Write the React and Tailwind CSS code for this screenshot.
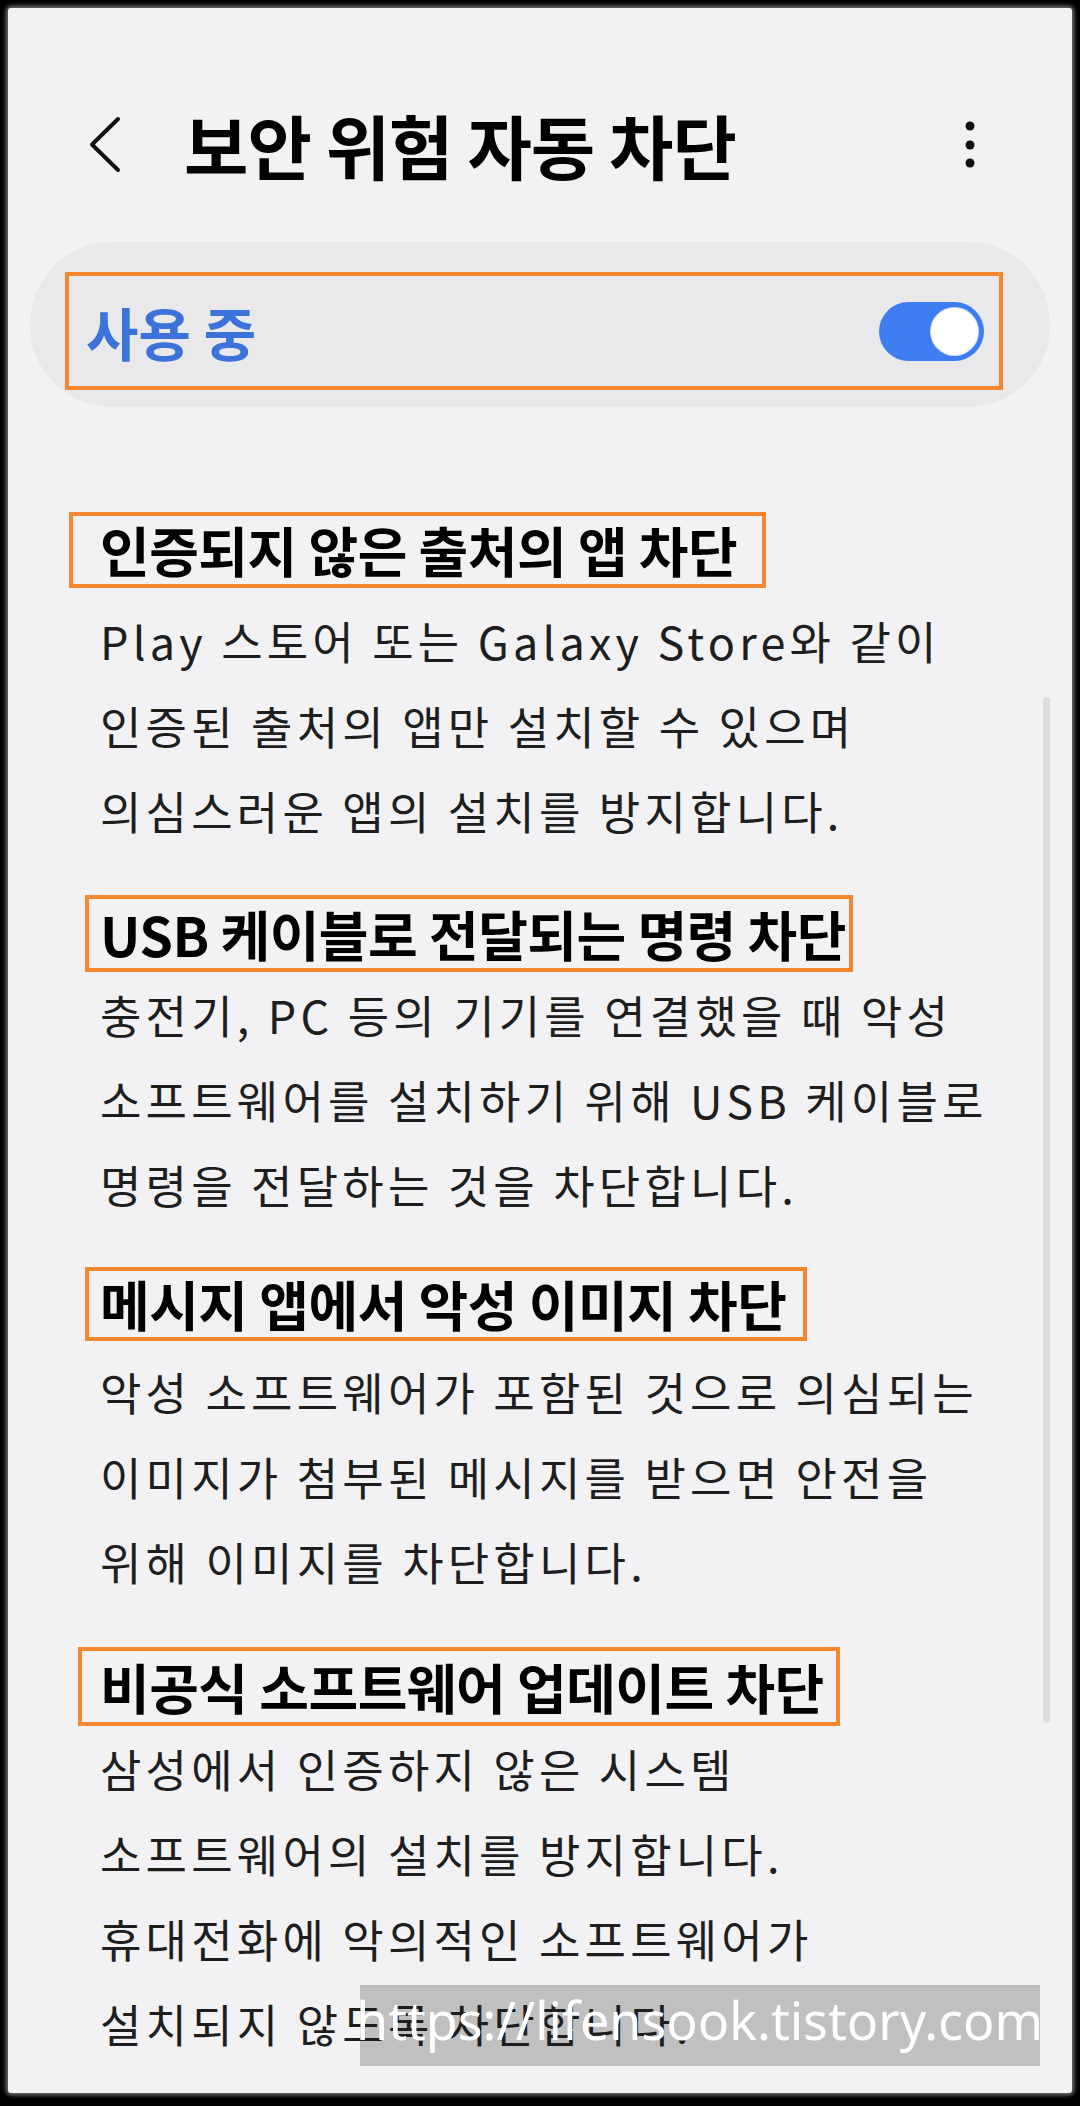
import React from "react";

const sections = [
  {
    title: "인증되지 않은 출처의 앱 차단",
    box: "mt-[105px] ml-[61px] w-[697px] h-[76px] pl-[27px]",
    body: "mt-[10px]",
    lines: [
      "Play 스토어 또는 Galaxy Store와 같이",
      "인증된 출처의 앱만 설치할 수 있으며",
      "의심스러운 앱의 설치를 방지합니다.",
    ],
  },
  {
    title: "USB 케이블로 전달되는 명령 차단",
    box: "mt-[42px] ml-[77px] w-[768px] h-[77px] pl-[11px]",
    body: "mt-0",
    lines: [
      "충전기, PC 등의 기기를 연결했을 때 악성",
      "소프트웨어를 설치하기 위해 USB 케이블로",
      "명령을 전달하는 것을 차단합니다.",
    ],
  },
  {
    title: "메시지 앱에서 악성 이미지 차단",
    box: "mt-[40px] ml-[77px] w-[722px] h-[74px] pl-[11px]",
    body: "mt-[8px]",
    lines: [
      "악성 소프트웨어가 포함된 것으로 의심되는",
      "이미지가 첨부된 메시지를 받으면 안전을",
      "위해 이미지를 차단합니다.",
    ],
  },
  {
    title: "비공식 소프트웨어 업데이트 차단",
    box: "mt-[43px] ml-[70px] w-[762px] h-[79px] pl-[18px]",
    body: "mt-0",
    lines: [
      "삼성에서 인증하지 않은 시스템",
      "소프트웨어의 설치를 방지합니다.",
      "휴대전화에 악의적인 소프트웨어가",
      "설치되지 않도록 차단합니다.",
    ],
  },
];

function Section({ s }) {
  return (
    <div>
      {/* orange annotation box round the heading */}
      <div
        className={`${s.box} flex items-center border-[4px] border-[#f5872e]`}
      >
        <span className="whitespace-nowrap text-[54px] font-bold leading-none tracking-[-0.5px] text-black">
          {s.title}
        </span>
      </div>
      <div className={`${s.body} ml-[92px]`}>
        {s.lines.map((line) => (
          <p
            key={line}
            className="whitespace-nowrap text-[45px] leading-[85px] tracking-[4.2px] text-[#1e1e1e]"
          >
            {line}
          </p>
        ))}
      </div>
    </div>
  );
}

export default function App() {
  return (
    <div className="h-[2106px] w-[1080px] bg-black px-[8px] pt-[8px] [font-family:'Noto_Sans_CJK_KR','Noto_Sans',sans-serif]">
      <div className="relative h-[2085px] w-[1064px] overflow-hidden rounded-[3px] bg-[#f2f2f4] shadow-[0_0_4px_2px_rgba(200,200,200,0.6)]">
        {/* watermark backing, sits under the text */}
        <div className="absolute left-[352px] top-[1977px] h-[81px] w-[680px] bg-[#c0c0c0]" />

        {/* scrollbar */}
        <div className="absolute left-[1035px] top-[689px] h-[1026px] w-[7px] rounded-full bg-[#dcdcdf]" />

        <div className="relative z-10">
          {/* header */}
          <div className="mt-[90px] flex h-[94px] items-center pl-[80px] pr-[92px]">
            <svg width="34" height="60" viewBox="0 0 34 60" fill="none">
              <path
                d="M30 4 L4 29.5 L30 55"
                stroke="#111"
                strokeWidth="4"
                strokeLinecap="round"
                strokeLinejoin="round"
              />
            </svg>
            <h1 className="ml-[62px] flex-1 whitespace-nowrap text-[70px] font-bold leading-none tracking-[-1px] text-black">
              보안 위험 자동 차단
            </h1>
            <svg width="20" height="60" viewBox="0 0 20 60" fill="#111">
              <circle cx="10" cy="11" r="4.5" />
              <circle cx="10" cy="30" r="4.5" />
              <circle cx="10" cy="48" r="4.5" />
            </svg>
          </div>

          {/* master switch card */}
          <div className="mx-[22px] mt-[50px] h-[165px] rounded-[82px] bg-[#e9e9eb] pt-[30px]">
            <div className="ml-[35px] flex h-[118px] w-[938px] items-center justify-between border-[4px] border-[#f5872e] pl-[17px] pr-[15px]">
              <span className="text-[57px] font-bold leading-none text-[#3b73db]">
                사용 중
              </span>
              <div className="flex h-[59px] w-[105px] items-center justify-end rounded-full bg-[#3e7cf2] pr-[6px]">
                <div className="h-[47px] w-[47px] rounded-full bg-white ring-1 ring-[#cfe0ff]" />
              </div>
            </div>
          </div>

          {sections.map((s) => (
            <Section key={s.title} s={s} />
          ))}
        </div>

        {/* watermark text, over everything */}
        <div className="absolute left-[348px] top-[1986px] z-20 whitespace-nowrap text-[52px] leading-none text-white [font-family:'Noto_Sans',sans-serif]">
          https://lifensook.tistory.com
        </div>
      </div>
    </div>
  );
}
